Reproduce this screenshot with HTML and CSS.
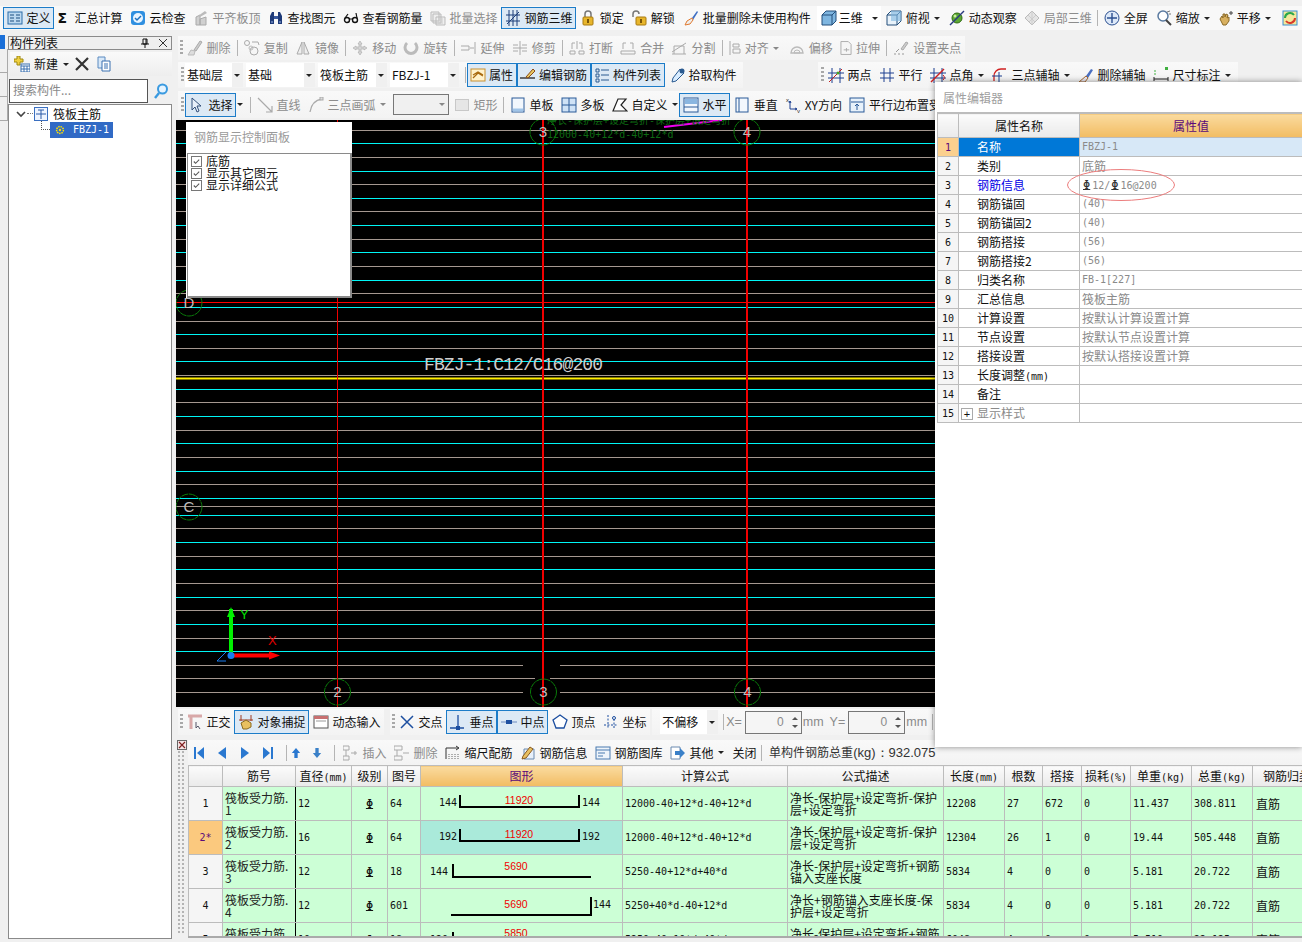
FILE: index.html
```html
<!DOCTYPE html>
<html lang="zh">
<head>
<meta charset="utf-8">
<title>钢筋三维</title>
<link rel="stylesheet" href="styles.css">
</head>
<body>
<div class="app">

  <header class="topbar">
    <span class="t on"><svg class="ic" viewBox="0 0 16 16"><rect x="1" y="2" width="14" height="12" fill="#bcd8f0" stroke="#2a6ca8"/><path d="M3 5h4M3 8h4M3 11h4M9 5h4M9 8h4M9 11h4" stroke="#1d4f80"/></svg>定义</span>
    <span class="t"><span class="sigma">Σ</span><span class="lead">汇总计算</span></span>
    <span class="t"><svg class="ic" viewBox="0 0 16 16"><rect x="1" y="1" width="14" height="14" rx="3" fill="#2f8fe0"/><circle cx="8" cy="8" r="5" fill="#e8f4ff"/><path d="M5 8l2 2 4-4" fill="none" stroke="#1c6fc0" stroke-width="1.5"/></svg>云检查</span>
    <span class="t off"><svg class="ic" viewBox="0 0 16 16"><path d="M3 15V7l4-2v10zM7 15V9l6-2v8z" fill="#d0d0d0" stroke="#aaa"/><path d="M5 6l7-5 2 2-7 4z" fill="#bbb"/></svg>平齐板顶</span>
    <span class="t"><svg class="ic" viewBox="0 0 16 16"><path d="M2 14V6l2-4h2v12zM14 14V6l-2-4h-2v12z" fill="#1e3a78"/><rect x="6" y="6" width="4" height="3" fill="#3a5aa0"/><path d="M3 12h2M11 12h2" stroke="#9db8e8"/></svg>查找图元</span>
    <span class="t"><svg class="ic" viewBox="0 0 16 16"><circle cx="4" cy="10" r="2.5" fill="none" stroke="#111" stroke-width="1.4"/><circle cx="12" cy="10" r="2.5" fill="none" stroke="#111" stroke-width="1.4"/><path d="M6 9h4M2 8l3-4M14 8l-1-5" fill="none" stroke="#111" stroke-width="1.2"/></svg>查看钢筋量</span>
    <span class="t off"><svg class="ic" viewBox="0 0 16 16"><path d="M1 2h8v9H1zM3 4h8v9H3zM6 7h9v8H6z" fill="#eee" stroke="#bbb"/><path d="M8 9h5M8 11h5M8 13h5" stroke="#ccc"/></svg>批量选择</span>
    <span class="t on"><svg class="ic" viewBox="0 0 16 16"><path d="M1 5h14M1 11h14M4 0v16M8 0v16M12 0v16M2 14L14 2" stroke="#1d3f7a" fill="none"/></svg>钢筋三维</span>
    <span class="t"><svg class="ic" viewBox="0 0 16 16"><path d="M5 7V4a3 3 0 016 0v3" fill="none" stroke="#777" stroke-width="1.5"/><rect x="3" y="7" width="10" height="8" rx="1" fill="#e8b62c" stroke="#a87a10"/><rect x="7" y="9" width="2" height="4" fill="#7a5608"/></svg>锁定</span>
    <span class="t"><svg class="ic" viewBox="0 0 16 16"><path d="M2 7V4a3 3 0 016 0" fill="none" stroke="#777" stroke-width="1.5"/><rect x="5" y="7" width="10" height="8" rx="1" fill="#e8b62c" stroke="#a87a10"/><rect x="9" y="9" width="2" height="4" fill="#7a5608"/></svg>解锁</span>
    <span class="t gap1"><svg class="ic" viewBox="0 0 16 16"><path d="M9 8l5-7 1 1-5 8z" fill="#3f6fc4"/><path d="M9 8l1 2-3 4-5 1 2-4z" fill="#eee" stroke="#e07a30"/></svg>批量删除未使用构件</span>
    <span class="whitebox">
      <span class="t"><svg class="ic" viewBox="0 0 16 16"><path d="M1 5l4-4h10v10l-4 4H1z" fill="#7fb6e0" stroke="#244f7a"/><path d="M1 5h10v10M11 5l4-4" fill="none" stroke="#244f7a"/></svg><span class="tight">三维</span></span>
      <i class="caret wide"></i>
    </span>
    <span class="t gap1"><svg class="ic" viewBox="0 0 16 16"><path d="M1 5l4-4h10v10l-4 4H1z" fill="#e8f2fa" stroke="#244f7a"/><path d="M1 5h10v10M11 5l4-4" fill="none" stroke="#244f7a"/><path d="M5 1h10v10H5z" fill="#7fb6e0" fill-opacity=".6"/></svg>俯视</span><i class="caret"></i>
    <span class="t gap2"><svg class="ic" viewBox="0 0 16 16"><circle cx="8" cy="8" r="5" fill="#5da832" stroke="#2e6a12"/><path d="M1 15L15 1" stroke="#2a3a80" stroke-width="1.5"/><circle cx="6" cy="6" r="1.5" fill="#c8f0a0"/></svg>动态观察</span>
    <span class="t off"><svg class="ic" viewBox="0 0 16 16"><path d="M8 1l7 7-7 7-7-7z" fill="#e4e4e4" stroke="#bbb"/><path d="M4 5l7 7M8 1v14M12 5l-7 7" stroke="#ccc"/></svg>局部三维</span>
    <i class="sep"></i>
    <span class="t"><svg class="ic" viewBox="0 0 16 16"><circle cx="8" cy="8" r="7" fill="#dce8f8" stroke="#2b4f90"/><path d="M8 3v10M3 8h10" stroke="#2b4f90" stroke-width="1.4"/></svg>全屏</span>
    <span class="t gap1"><svg class="ic" viewBox="0 0 16 16"><circle cx="7" cy="6" r="5" fill="#fff" stroke="#5a7aa0" stroke-width="1.5"/><path d="M10 10l5 5" stroke="#444" stroke-width="2"/><path d="M11 2l3-1M13 4h2" stroke="#777"/></svg>缩放</span><i class="caret"></i>
    <span class="t"><svg class="ic" viewBox="0 0 16 16"><path d="M3 9l2-3 1 2V4l2 0 0 3 1-3 2 1-1 3 2-1v4l-3 4H6z" fill="#d8b060" stroke="#8a6a28"/><path d="M12 3h4M14 1v4" stroke="#444"/></svg>平移</span><i class="caret"></i>
    <span class="t last"><svg class="ic" viewBox="0 0 16 16"><rect x="1" y="1" width="14" height="14" fill="#f4e89a" stroke="#3b8fd0"/><path d="M3 8a5 5 0 019-3" fill="none" stroke="#2aa84a" stroke-width="2"/><path d="M13 8a5 5 0 01-9 3" fill="none" stroke="#d83a2a" stroke-width="2"/></svg></span>
  </header>

  <div class="workspace">
    <aside class="left">
      <div class="tabs"><i class="tab first"></i><i class="tab"></i><i class="tab"></i><i class="tab"></i></div>
      <div class="leftcol">
        <div class="dockhead"><span>构件列表</span><span class="dockbtns"><svg class="mini" viewBox="0 0 10 10"><path d="M3 1h4v5H3zM1 6h8M5 6v4M6 1v5" fill="none" stroke="#111"/></svg><svg class="mini" viewBox="0 0 10 10"><path d="M1 1l8 8M9 1l-8 8" stroke="#333"/></svg></span></div>
        <div class="lefttools">
          <span class="t"><svg class="ic" viewBox="0 0 16 16"><path d="M3 0h3v3h3v3H6v3H3V6H0V3h3z" fill="#f0d040" stroke="#a08a10"/><rect x="7" y="8" width="9" height="8" fill="#fff" stroke="#3a70b0"/><path d="M7 10h9M10 10v6M13 10v6M7 13h9" stroke="#3a70b0"/></svg>新建</span><i class="caret"></i>
          <svg class="ic bigx" viewBox="0 0 16 16"><path d="M2 2l12 12M14 2L2 14" stroke="#333" stroke-width="2.2"/></svg>
          <svg class="ic" viewBox="0 0 16 16"><path d="M2 1h7v11H2z" fill="#d8e8f8" stroke="#5a8ac0"/><path d="M6 5h8v10H6z" fill="#fff" stroke="#3a70b0"/><path d="M8 8h4M8 10h4M8 12h4" stroke="#3a70b0"/></svg>
        </div>
        <div class="searchrow">
          <div class="search">搜索构件...</div>
          <svg class="ic" viewBox="0 0 16 16"><circle cx="9.5" cy="6" r="4.5" fill="#e6f4ff" stroke="#3a9ae0" stroke-width="2"/><path d="M6 10l-4 5" stroke="#3a9ae0" stroke-width="2.4"/></svg>
        </div>
        <div class="tree">
          <div class="node"><svg class="chev" viewBox="0 0 10 10"><path d="M1 3l4 4 4-4" fill="none" stroke="#444" stroke-width="1.6"/></svg><i class="dash"></i><svg class="ic treeic" viewBox="0 0 14 14"><rect x=".5" y=".5" width="13" height="13" fill="#eef4ff" stroke="#3a6fc0"/><path d="M2 7h10M7 3v9M4 3h6" stroke="#2a5aa8" fill="none"/></svg><span>筏板主筋</span></div>
          <div class="node child"><i class="ell"></i><span class="sel"><svg class="star" viewBox="0 0 10 10"><circle cx="5" cy="5" r="3.4" fill="none" stroke="#ffe000" stroke-width="1.5" stroke-dasharray="1.5 .8"/><circle cx="5" cy="5" r="1.2" fill="#ffe000"/></svg><span class="m">FBZJ-1</span></span></div>
        </div>
      </div>
    </aside>

    <main class="center">
      <div class="row r2">
        <div class="band">
          <i class="grip"></i>
          <span class="t off"><svg class="ic" viewBox="0 0 16 16"><path d="M7 10l6-9 2 1-6 9z" fill="#ccc" stroke="#aaa"/><path d="M1 15l3-5 4 1-1 4z" fill="#ddd" stroke="#bbb"/></svg>删除</span><i class="sep"></i>
          <span class="t off"><svg class="ic" viewBox="0 0 16 16"><circle cx="3" cy="3" r="2.5" fill="none" stroke="#aaa"/><circle cx="10" cy="11" r="4" fill="none" stroke="#aaa"/><circle cx="7" cy="8" r="2" fill="none" stroke="#bbb"/><path d="M8 2h6l1 3" fill="none" stroke="#aaa"/></svg>复制</span>
          <span class="t off"><svg class="ic" viewBox="0 0 16 16"><path d="M7 2v12H2zM9 2v12h5z" fill="#eee" stroke="#aaa"/></svg>镜像</span><i class="sep"></i>
          <span class="t off"><svg class="ic" viewBox="0 0 16 16"><path d="M8 1l2 3H9v3h3V6l3 2-3 2V9H9v3h1l-2 3-2-3h1V9H4v1L1 8l3-2v1h3V4H6z" fill="#d4d4d4" stroke="#aaa" stroke-width=".6"/></svg>移动</span>
          <span class="t off"><svg class="ic" viewBox="0 0 16 16"><path d="M4 3a6 6 0 108 0" fill="none" stroke="#bbb" stroke-width="3"/></svg>旋转</span><i class="sep"></i>
          <span class="t off"><svg class="ic" viewBox="0 0 16 16"><path d="M14 2v12M0 6h8v4H0M9 8h4" fill="none" stroke="#aaa"/></svg>延伸</span>
          <span class="t off"><svg class="ic" viewBox="0 0 16 16"><path d="M8 1v14M1 5h5M1 11h5M10 5h5M10 11h5M1 8h14" fill="none" stroke="#aaa"/></svg>修剪</span><i class="sep"></i>
          <span class="t off"><svg class="ic" viewBox="0 0 16 16"><path d="M1 11h5v3H1zM10 11h5v3h-5zM3 3h3M10 3h3M8 1v8M3 3v6M13 3v6" fill="none" stroke="#aaa"/></svg>打断</span>
          <span class="t off"><svg class="ic" viewBox="0 0 16 16"><path d="M1 11h14v3H1zM3 3h3M10 3h3M3 3v6M13 3v6" fill="none" stroke="#aaa"/></svg>合并</span>
          <span class="t off"><svg class="ic" viewBox="0 0 16 16"><path d="M1 14h14M3 14V6h10v8M1 12L15 3" fill="none" stroke="#aaa"/></svg>分割</span><i class="sep"></i>
          <span class="t off"><svg class="ic narrow" viewBox="0 0 12 16"><path d="M1 1v14M4 4h6v3H4zM4 9h7v4H4z" fill="none" stroke="#aaa"/></svg>对齐</span><i class="caret gray"></i>
          <span class="t off"><svg class="ic" viewBox="0 0 16 16"><path d="M2 13a6 6 0 1112 0z" fill="none" stroke="#bbb" stroke-width="1.4"/><path d="M5 13a3 3 0 116 0z" fill="none" stroke="#bbb"/></svg>偏移</span>
          <span class="t off"><svg class="ic narrow" viewBox="1 0 13 16"><path d="M2 1h8l3 3v11H2z" fill="#f6f6f6" stroke="#aaa"/><path d="M5 10h6M8 8v4" stroke="#aaa"/></svg>拉伸</span><i class="sep"></i>
          <span class="t off"><svg class="ic" viewBox="0 0 16 16"><path d="M8 9l5-7 2 1-5 7z" fill="#ccc" stroke="#aaa"/><path d="M1 14h2M5 14h2M9 14h2M3 12l3-3" stroke="#999"/></svg>设置夹点</span>
        </div>
      </div>

      <div class="row r3">
        <div class="band b1">
          <i class="grip"></i>
          <span class="combo c0"><span>基础层</span><i class="caret"></i></span>
          <span class="combo"><span>基础</span><i class="caret"></i></span>
          <span class="combo"><span>筏板主筋</span><i class="caret"></i></span>
          <span class="combo"><span>FBZJ-1</span><i class="caret"></i></span>
          <i class="sep"></i>
          <span class="t on"><svg class="ic" viewBox="0 0 16 16"><rect x="1" y="2" width="14" height="12" fill="#fff2cc" stroke="#c89030"/><path d="M3 11l5-5 5 3M3 8l5-3 5 3" fill="none" stroke="#a86a10" stroke-width="1.3"/></svg>属性</span>
          <span class="t on"><svg class="ic" viewBox="0 0 16 16"><path d="M0 11h15" stroke="#222" stroke-width="1.3"/><path d="M6 10l7-8 2 2-7 7z" fill="#e8c860" stroke="#8a4a18"/></svg>编辑钢筋</span>
          <span class="t on"><svg class="ic" viewBox="0 0 16 16"><path d="M2 2h3v3H2zM2 7h3v3H2zM2 12h3v3H2zM7 3h8M7 8h8M7 13h8" fill="none" stroke="#2a5a90"/></svg>构件列表</span>
          <span class="t pick"><svg class="ic" viewBox="0 0 16 16"><path d="M10 2l4 4-8 8-4 1 1-4z" fill="#d8ecff" stroke="#2a5a90"/><circle cx="12" cy="4" r="2.5" fill="#2a5a90"/></svg>拾取构件</span>
        </div>
        <div class="band b2">
          <i class="grip"></i>
          <span class="t"><svg class="ic" viewBox="0 0 16 16"><path d="M4 1v15M12 1v15M0 6h16M0 11h16" stroke="#1d3f90" fill="none"/><path d="M1 15L14 2" stroke="#c02020"/><circle cx="10" cy="6" r="1.5" fill="#48a020"/></svg>两点</span>
          <span class="t"><svg class="ic" viewBox="0 0 16 16"><path d="M5 1v14M11 1v14M1 6h14M1 11h14" stroke="#1d3f90" fill="none"/></svg>平行</span>
          <span class="t"><svg class="ic" viewBox="0 0 16 16"><path d="M4 1v15M12 1v15M0 6h16M0 11h16" stroke="#1d3f90" fill="none"/><path d="M1 15L14 2" stroke="#d02020" stroke-width="1.4"/><path d="M13 8a3 3 0 010 5" fill="none" stroke="#d02020"/></svg>点角</span><i class="caret"></i>
          <span class="t"><svg class="ic" viewBox="0 0 16 16"><path d="M2 14V9a7 7 0 017-7h5" fill="none" stroke="#d02020" stroke-width="1.3"/><path d="M0 9h10M7 5v11" stroke="#1d3f90"/></svg>三点辅轴</span><i class="caret"></i>
          <span class="t"><svg class="ic" viewBox="0 0 16 16"><path d="M8 9l5-7 2 1-5 8z" fill="#4a6fc0"/><path d="M8 9l2 2-3 4H1z" fill="#e8e8f4" stroke="#a86a30"/></svg>删除辅轴</span>
          <span class="t"><svg class="ic" viewBox="0 0 16 16"><rect x="12" y="0" width="3" height="3" fill="#40b040"/><path d="M1 12h14M1 10v4M15 10v4" stroke="#222"/><path d="M1 7h2M1 4h2" stroke="#40b040"/></svg>尺寸标注</span><i class="caret"></i>
        </div>
      </div>

      <div class="row r4">
        <div class="band b4">
          <i class="grip"></i>
          <span class="t on sel-btn"><svg class="ic" viewBox="0 0 16 16"><path d="M3 1v12l3-3 2 5 2-1-2-5h4z" fill="#e8f0fa" stroke="#33507a"/></svg>选择</span><i class="caret"></i><i class="sep"></i>
          <span class="t off"><svg class="ic" viewBox="0 0 16 16"><path d="M1 1l14 14M15 9v6H9" fill="none" stroke="#aaa" stroke-width="1.2"/></svg>直线</span>
          <span class="t off"><svg class="ic" viewBox="0 0 16 16"><path d="M2 15C3 8 7 3 14 2" fill="none" stroke="#aaa" stroke-width="1.3"/><rect x="12" y="0" width="3" height="3" fill="#ddd" stroke="#aaa"/></svg>三点画弧</span><i class="caret gray"></i>
          <span class="blank"><i class="caret gray"></i></span>
          <span class="t off"><span class="rectbox"></span>矩形</span><i class="sep"></i>
          <span class="t"><svg class="ic" viewBox="0 0 16 16"><rect x="2" y="1" width="12" height="14" fill="#f2f7fd" stroke="#2a5a98"/><path d="M3 13h10" stroke="#a0c4e8" stroke-width="3"/></svg>单板</span>
          <span class="t"><svg class="ic" viewBox="0 0 16 16"><rect x="1" y="1" width="14" height="14" fill="#cfe2f6" stroke="#2a5a98"/><path d="M8 1v14M1 8h14" stroke="#2a5a98"/></svg>多板</span>
          <span class="t"><svg class="ic" viewBox="0 0 16 16"><path d="M6 2h8l-5 6 6 6H1z" fill="#fff" stroke="#222" stroke-width="1.2"/></svg>自定义</span><i class="caret"></i>
          <span class="t on"><svg class="ic" viewBox="0 0 16 16"><rect x="1" y="1" width="14" height="14" fill="#f2f7fd" stroke="#2a5a98"/><rect x="2" y="2" width="12" height="5" fill="#8ab6e0"/><path d="M1 10h14" stroke="#2a5a98"/></svg>水平</span>
          <span class="t"><svg class="ic" viewBox="0 0 16 16"><rect x="2" y="1" width="12" height="14" fill="#f2f7fd" stroke="#2a5a98"/><path d="M5 1v14" stroke="#2a5a98"/></svg>垂直</span>
          <span class="t"><svg class="ic" viewBox="0 0 16 16"><path d="M5 4v8h7M5 4L4 6M5 4l1 2M12 12l-2-1M12 12l-2 1" fill="none" stroke="#1d3f90"/><text class="icx" x="1" y="5">x</text><text class="icx" x="12" y="16">y</text></svg>XY方向</span>
          <span class="t"><svg class="ic" viewBox="0 0 16 16"><rect x="1" y="1" width="14" height="14" fill="#e8f2fb" stroke="#2a5a98"/><path d="M2 5h12M8 13V7M6 9l2-2 2 2" fill="none" stroke="#2a5a98"/></svg>平行边布置受力筋</span>
        </div>
      </div>

      <div class="canvas">
        <svg class="cad" viewBox="0 0 759 587">
          <path class="gray" d="M0 10.5H759M0 37.5H759M0 64.5H759M0 91.5H759M0 119.5H759M0 146.5H759M0 173.5H759M0 201.5H759M0 228.5H759M0 255.5H759M0 282.5H759M0 310.5H759M0 337.5H759M0 364.5H759M0 386.5H759M0 408.5H759M0 436.5H759M0 463.5H759M0 490.5H759M0 518.5H759M0 545.5H347M384 545.5H759M0 558.5H359M374 558.5H759M0 572.5H347M384 572.5H759"/>
          <path class="cyan" d="M0 23.5H759M0 51.5H759M0 78.5H759M0 105.5H759M0 132.5H759M0 160.5H759M0 187.5H759M0 214.5H759M0 241.5H759M0 269.5H759M0 296.5H759M0 323.5H759M0 351.5H759M0 378.5H759M0 395.5H759M0 422.5H759M0 449.5H759M0 477.5H759M0 504.5H759M0 531.5H759"/>
          <path class="yellow" d="M0 258.5H759"/>
          <path class="redh" d="M0 182.5H759"/>
          <path class="redv" d="M161.5 0V587"/>
          <path class="redv2" d="M367 0V587M571 0V587"/>
          <path class="magenta" d="M488 7L546 0"/>
          <text class="dim" x="371" y="4">净长-保护层+设定弯折-保护层+设定弯折</text>
          <text class="dim" x="371" y="18">12000-40+12*d-40+12*d</text>
          <g class="axisring">
            <circle cx="367" cy="12" r="13"/><circle cx="571" cy="12" r="13"/><circle cx="13" cy="183" r="13"/><circle cx="13" cy="387" r="13"/><circle cx="161.500" cy="572" r="13"/><circle cx="367.500" cy="572" r="13"/><circle cx="571.500" cy="572" r="13"/>
          </g>
          <g class="axislabel">
            <text x="367" y="17">3</text><text x="571" y="17">4</text><text x="13" y="188">D</text><text x="13" y="392">C</text><text x="161.500" y="577">2</text><text x="367.500" y="577">3</text><text x="571.500" y="577">4</text>
          </g>
          <text class="tag" x="248" y="250" textLength="179" lengthAdjust="spacing">FBZJ-1:C12/C16@200</text>
          <path class="axg" d="M55 535V489"/><path class="axgh" d="M55 487l-4 10h8z"/>
          <path class="axr" d="M55 535.500H94"/><path class="axrh" d="M104 535.500l-11-4v8z"/>
          <path class="axb" d="M41 541l9-9M41 541h9"/><circle class="axbd" cx="55" cy="535.500" r="3.500"/>
          <text class="axy" x="64" y="499">Y</text><text class="axx" x="92" y="525">X</text>
        </svg>
        <section class="popup">
          <div class="popup-title">钢筋显示控制面板</div>
          <div class="popup-body">
            <label class="chk"><i class="box"><svg viewBox="0 0 10 10"><path d="M2 5l2 2 4-4" fill="none" stroke="#555" stroke-width="1.2"/></svg></i>底筋</label>
            <label class="chk"><i class="box"><svg viewBox="0 0 10 10"><path d="M2 5l2 2 4-4" fill="none" stroke="#555" stroke-width="1.2"/></svg></i>显示其它图元</label>
            <label class="chk"><i class="box"><svg viewBox="0 0 10 10"><path d="M2 5l2 2 4-4" fill="none" stroke="#555" stroke-width="1.2"/></svg></i>显示详细公式</label>
          </div>
        </section>
      </div>

      <div class="row r5">
        <div class="band">
          <i class="grip"></i>
          <span class="t"><svg class="ic" viewBox="0 0 16 16"><path d="M1 2h14M4 2v13" stroke="#d8a8a8" stroke-width="3" fill="none"/><path d="M9 8v6l2-2 2 3" fill="none" stroke="#556"/></svg>正交</span>
          <span class="t on"><svg class="ic" viewBox="0 0 16 16"><path d="M3 1v6M13 1v6M1 6h14" stroke="#a03a20" fill="none"/><path d="M3 9l5-3 5 3v4l-4 2H5z" fill="#e8c060" stroke="#8a6a20"/></svg>对象捕捉</span>
          <span class="t"><svg class="ic" viewBox="0 0 16 16"><rect x="1" y="2" width="14" height="12" fill="#fff" stroke="#555"/><rect x="1" y="2" width="14" height="3" fill="#c87070"/><path d="M3 7h10" stroke="#999"/></svg>动态输入</span>
        </div>
        <div class="band">
          <i class="grip"></i>
          <span class="t"><svg class="ic" viewBox="0 0 16 16"><path d="M2 2l12 12M14 2L2 14" stroke="#1d4fa0" stroke-width="1.5"/></svg>交点</span>
          <span class="t on"><svg class="ic" viewBox="0 0 16 16"><path d="M8 1v13M0 14h14" stroke="#1d4fa0" stroke-width="1.3"/><rect x="6" y="12" width="4" height="4" fill="#1d4fa0"/></svg>垂点</span>
          <span class="t on"><svg class="ic" viewBox="0 0 16 16"><path d="M0 8h16" stroke="#6a8ac0"/><rect x="5" y="6" width="6" height="4" fill="#1d4fa0"/></svg>中点</span>
          <span class="t"><svg class="ic" viewBox="0 0 16 16"><path d="M8 1l7 5-3 8H4L1 6z" fill="#fff" stroke="#1d4fa0" stroke-width="1.3"/></svg>顶点</span>
          <span class="t"><svg class="ic" viewBox="0 0 16 16"><path d="M5 1v14M1 11h14M11 5v10" stroke="#1d4fa0" stroke-dasharray="2 1.500" fill="none"/><circle cx="11" cy="4" r="1.500" fill="none" stroke="#1d4fa0"/></svg>坐标</span>
        </div>
        <div class="band b5">
          <span class="combo c5"><span>不偏移</span><i class="caret"></i></span>
          <i class="sep"></i>
          <span class="lab">X=</span>
          <span class="spin"><span class="val">0</span><span class="arr"><i></i><i class="dn"></i></span></span>
          <span class="lab">mm</span>
          <span class="lab ml">Y=</span>
          <span class="spin"><span class="val">0</span><span class="arr"><i></i><i class="dn"></i></span></span>
          <span class="lab">mm</span>
          <i class="sep"></i>
        </div>
      </div>

      <div class="bottom">
        <div class="dockside"><svg class="closex" viewBox="0 0 10 10"><rect x=".5" y=".5" width="9" height="9" fill="#f4e4e4" stroke="#666"/><path d="M2 2l6 6M8 2l-6 6" stroke="#802020" stroke-width="1.2"/></svg><i class="dots"></i></div>
        <div class="bottomcol">
          <div class="r6">
            <svg class="nav" viewBox="0 0 12 14"><path d="M1 1h2v12H1zM11 1v12L4 7z" fill="#2a78d0"/></svg>
            <svg class="nav" viewBox="0 0 12 14"><path d="M10 1v12L2 7z" fill="#2a78d0"/></svg>
            <svg class="nav" viewBox="0 0 12 14"><path d="M2 1v12l8-6z" fill="#2a78d0"/></svg>
            <svg class="nav" viewBox="0 0 12 14"><path d="M11 1H9v12h2zM1 1v12l7-6z" fill="#2a78d0"/></svg>
            <i class="sep s6"></i>
            <svg class="nav sm" viewBox="0 0 12 14"><path d="M6 1l5 6H8v6H4V7H1z" fill="#2a78d0"/></svg>
            <svg class="nav sm" viewBox="0 0 12 14"><path d="M6 13l5-6H8V1H4v6H1z" fill="#3a80c8"/></svg>
            <i class="sep s6"></i>
            <span class="t off"><svg class="ic" viewBox="0 0 16 16"><path d="M0 1h6v4H0zM0 11h6v4H0zM3 5v6M8 8h6M12 6v4" fill="none" stroke="#aaa"/></svg>插入</span>
            <span class="t off"><svg class="ic" viewBox="0 0 16 16"><path d="M0 1h8v4H0zM0 11h8v4H0zM3 5v6M9 8h6" fill="none" stroke="#aaa"/></svg>删除</span>
            <span class="t"><svg class="ic" viewBox="0 0 16 16"><path d="M1 14V3h12M11 1l3 2-3 2" fill="none" stroke="#333"/><path d="M4 14V8M7 14V8M10 14V8M13 14V8" stroke="#666" stroke-dasharray="1 1"/></svg>缩尺配筋</span>
            <span class="t"><svg class="ic" viewBox="0 0 16 16"><path d="M4 4h10v10H4z" fill="#e8f0fa" stroke="#6a8ab0"/><path d="M3 11l7-9 3 2-7 9-4 1z" fill="#e8c060" stroke="#8a5a20"/></svg>钢筋信息</span>
            <span class="t"><svg class="ic" viewBox="0 0 16 16"><rect x="1" y="2" width="14" height="12" fill="#eef4fa" stroke="#4a7ab0"/><path d="M1 5h14M3 8h7M3 11h5" stroke="#4a7ab0"/></svg>钢筋图库</span>
            <span class="t"><svg class="ic" viewBox="0 0 16 16"><path d="M1 2h9v12H1z" fill="#fff" stroke="#6a8ab0"/><path d="M5 6h5V3l5 5-5 5v-3H5z" fill="#3a80c8"/></svg>其他</span><i class="caret"></i>
            <span class="t close">关闭</span><i class="sep s6"></i>
            <span class="total">单构件钢筋总重<span class="latin">(kg)：932.075</span></span>
          </div>
          <div class="gridwrap">
            <table class="grid">
              <colgroup><col class="w34"><col class="w73"><col class="w56"><col class="w36"><col class="w33"><col class="w202"><col class="w165"><col class="w156"><col class="w61"><col class="w38"><col class="w39"><col class="w49"><col class="w61"><col class="w61"><col class="w80"></colgroup>
              <thead>
                <tr><th></th><th>筋号</th><th>直径<span class="u">(mm)</span></th><th>级别</th><th>图号</th><th class="hot">图形</th><th>计算公式</th><th>公式描述</th><th>长度<span class="u">(mm)</span></th><th>根数</th><th>搭接</th><th>损耗<span class="u">(%)</span></th><th>单重<span class="u">(kg)</span></th><th>总重<span class="u">(kg)</span></th><th class="lft">钢筋归类</th></tr>
              </thead>
              <tbody>
                <tr><td class="idx">1</td><td class="nm">筏板受力筋.<br>1</td><td class="n">12</td><td class="g"><span class="grade">Φ</span></td><td class="n">64</td>
                  <td class="shape"><svg class="sh" viewBox="0 0 201 33"><path d="M39 8V20H158V8"/><text class="sn" x="36" y="19" text-anchor="end">144</text><text class="sn" x="161" y="19">144</text><text class="sr" x="98" y="17" text-anchor="middle">11920</text></svg></td>
                  <td class="n">12000-40+12*d-40+12*d</td><td class="d">净长-保护层+设定弯折-保护<br>层+设定弯折</td><td class="n">12208</td><td class="n">27</td><td class="n">672</td><td class="n">0</td><td class="n">11.437</td><td class="n">308.811</td><td class="k">直筋</td></tr>
                <tr><td class="idx cur">2*</td><td class="nm">筏板受力筋.<br>2</td><td class="n">16</td><td class="g"><span class="grade">Φ</span></td><td class="n">64</td>
                  <td class="shape act"><svg class="sh" viewBox="0 0 201 33"><path d="M39 8V20H158V8"/><text class="sn" x="36" y="19" text-anchor="end">192</text><text class="sn" x="161" y="19">192</text><text class="sr" x="98" y="17" text-anchor="middle">11920</text></svg></td>
                  <td class="n">12000-40+12*d-40+12*d</td><td class="d">净长-保护层+设定弯折-保护<br>层+设定弯折</td><td class="n">12304</td><td class="n">26</td><td class="n">1</td><td class="n">0</td><td class="n">19.44</td><td class="n">505.448</td><td class="k">直筋</td></tr>
                <tr><td class="idx">3</td><td class="nm">筏板受力筋.<br>3</td><td class="n">12</td><td class="g"><span class="grade">Φ</span></td><td class="n">18</td>
                  <td class="shape"><svg class="sh" viewBox="0 0 201 33"><path d="M32 9V22H170"/><text class="sn" x="27" y="20" text-anchor="end">144</text><text class="sr" x="95" y="15" text-anchor="middle">5690</text></svg></td>
                  <td class="n">5250-40+12*d+40*d</td><td class="d">净长-保护层+设定弯折+钢筋<br>锚入支座长度</td><td class="n">5834</td><td class="n">4</td><td class="n">0</td><td class="n">0</td><td class="n">5.181</td><td class="n">20.722</td><td class="k">直筋</td></tr>
                <tr><td class="idx">4</td><td class="nm">筏板受力筋.<br>4</td><td class="n">12</td><td class="g"><span class="grade">Φ</span></td><td class="n">601</td>
                  <td class="shape"><svg class="sh" viewBox="0 0 201 33"><path d="M30 26H170V8"/><text class="sn" x="172" y="19">144</text><text class="sr" x="95" y="19" text-anchor="middle">5690</text></svg></td>
                  <td class="n">5250+40*d-40+12*d</td><td class="d">净长+钢筋锚入支座长度-保<br>护层+设定弯折</td><td class="n">5834</td><td class="n">4</td><td class="n">0</td><td class="n">0</td><td class="n">5.181</td><td class="n">20.722</td><td class="k">直筋</td></tr>
                <tr><td class="idx">5</td><td class="nm">筏板受力筋.<br>5</td><td class="n">10</td><td class="g"><span class="grade">Φ</span></td><td class="n">18</td>
                  <td class="shape"><svg class="sh" viewBox="0 0 201 33"><path d="M32 9V22H170"/><text class="sn" x="27" y="20" text-anchor="end">120</text><text class="sr" x="95" y="14" text-anchor="middle">5850</text></svg></td>
                  <td class="n">5250-40+10*d+40*d</td><td class="d">净长-保护层+设定弯折+钢筋<br>锚入支座长度</td><td class="n">6048</td><td class="n">4</td><td class="n">0</td><td class="n">0</td><td class="n">5.510</td><td class="n">22.125</td><td class="k">直筋</td></tr>
              </tbody>
            </table>
          </div>
        </div>
      </div>
    </main>
  </div>

  <section class="props">
    <div class="props-title">属性编辑器</div>
    <table class="ptable">
      <colgroup><col class="p1"><col class="p2"><col></colgroup>
      <thead><tr><th></th><th>属性名称</th><th class="hot">属性值</th></tr></thead>
      <tbody>
        <tr class="cur"><td class="idx">1</td><td class="pn">名称</td><td class="pv m">FBZJ-1</td></tr>
        <tr><td class="idx">2</td><td class="pn">类别</td><td class="pv">底筋</td></tr>
        <tr><td class="idx">3</td><td class="pn link">钢筋信息</td><td class="pv m"><span class="grade">Φ</span>12/<span class="grade">Φ</span>16@200</td></tr>
        <tr><td class="idx">4</td><td class="pn">钢筋锚固</td><td class="pv m">(40)</td></tr>
        <tr><td class="idx">5</td><td class="pn">钢筋锚固2</td><td class="pv m">(40)</td></tr>
        <tr><td class="idx">6</td><td class="pn">钢筋搭接</td><td class="pv m">(56)</td></tr>
        <tr><td class="idx">7</td><td class="pn">钢筋搭接2</td><td class="pv m">(56)</td></tr>
        <tr><td class="idx">8</td><td class="pn">归类名称</td><td class="pv m">FB-1[227]</td></tr>
        <tr><td class="idx">9</td><td class="pn">汇总信息</td><td class="pv">筏板主筋</td></tr>
        <tr><td class="idx">10</td><td class="pn">计算设置</td><td class="pv">按默认计算设置计算</td></tr>
        <tr><td class="idx">11</td><td class="pn">节点设置</td><td class="pv">按默认节点设置计算</td></tr>
        <tr><td class="idx">12</td><td class="pn">搭接设置</td><td class="pv">按默认搭接设置计算</td></tr>
        <tr><td class="idx">13</td><td class="pn">长度调整<span class="u">(mm)</span></td><td class="pv"></td></tr>
        <tr><td class="idx">14</td><td class="pn">备注</td><td class="pv"></td></tr>
        <tr><td class="idx">15</td><td class="pn exp"><i class="plus">+</i>显示样式</td><td class="pv"></td></tr>
      </tbody>
    </table>
    <svg class="ring" viewBox="0 0 110 34"><ellipse cx="55" cy="17" rx="53.500" ry="15.500"/></svg>
  </section>

</div>
</body>
</html>
```
FILE: styles.css
```css
* { box-sizing: border-box; }
html, body { margin: 0; padding: 0; }
body {
  width: 1302px; height: 942px; overflow: hidden;
  background: #f0f0f0; color: #111;
  font: 12px/14px "Noto Sans CJK SC", "Noto Sans", sans-serif;
}
i { font-style: normal; }
.app { position: relative; width: 1302px; height: 942px; overflow: hidden; }

.ic { width: 16px; height: 16px; flex: none; display: block; }
.ic.narrow { width: 12px; }
.icx { font: 6px "Liberation Sans", sans-serif; fill: #222; }
.t { display: inline-flex; align-items: center; gap: 4px; padding: 0 3.5px; white-space: nowrap; flex: none; height: 100%; }
.t.off { color: #8c8c8c; }
.t.on { border: 1px solid #1c7cc8; background: #dce9f5; padding: 0 2.5px; }
.lead { margin-left: 3px; }
.tight { margin-left: -2px; }
.gap1 { margin-left: 1px; }
.gap2 { margin-left: 2px; }
.sigma { width: 10px; font: bold 14px/14px "DejaVu Sans", sans-serif; color: #111; }
.caret { display: inline-block; flex: none; width: 0; height: 0; margin: 0 3px 0 1px; border-left: 3px solid transparent; border-right: 3px solid transparent; border-top: 3px solid #222; }
.caret.gray { border-top-color: #888; }
.caret.wide { margin: 0 3px 0 6px; }
.sep { flex: none; width: 1px; height: 16px; background: #b4b4b4; margin: 0 2px; }
.grip { flex: none; width: 3px; height: 16px; margin: 0 0 0 2px; background: repeating-linear-gradient(#a8a8a8 0 2px, transparent 2px 4px); }

/* top toolbar */
.topbar { display: flex; align-items: center; height: 24px; margin: 6px 0 5px; padding-left: 3px; background: #f8f8f8; }
.topbar > .t { height: 22px; }
.whitebox { display: flex; align-items: center; height: 24px; margin-left: 3px; background: #fff; flex: none; }
.whitebox .t { height: 22px; }
.last { padding-left: 8px; }

/* layout */
.workspace { display: flex; height: 907px; }
.left { display: flex; width: 176px; flex: none; }
.tabs { width: 8px; flex: none; }
.tab { display: block; height: 24px; border-bottom: 1px solid #aaa; border-right: 1px solid #aaa; }
.tab.first { height: 14px; background: #1a6fd8; border: 0; margin-right: 3px; }
.leftcol { width: 164px; flex: none; }
.dockhead { display: flex; justify-content: space-between; align-items: center; height: 14px; margin-top: 1px; padding: 0 3px 0 1px; border: 1px solid #8a8a8a; background: #efefef; line-height: 12px; }
.dockbtns { display: flex; gap: 8px; }
.mini { width: 10px; height: 10px; display: block; }
.lefttools { display: flex; align-items: center; height: 24px; margin: 2px 0 3px 2px; background: linear-gradient(#fafafa, #eee); }
.lefttools .t { padding-left: 4px; }
.lefttools .caret { margin: 0 1px 0 1px; }
.bigx { margin: 0 6px 0 4px; }
.searchrow { display: flex; align-items: center; gap: 5px; }
.search { width: 139px; height: 24px; margin-left: 1px; padding: 0 3px; line-height: 19px; border: 1px solid #555; background: #fff; color: #8a8a8a; }
.tree { height: 835px; margin-top: 1px; border: 1px solid #8a8a8a; background: #fff; }
.node { display: flex; align-items: center; height: 17px; padding-left: 7px; }
.chev { width: 10px; height: 10px; flex: none; }
.dash { width: 6px; margin: 0 1px; border-top: 1px dotted #777; flex: none; }
.treeic { width: 14px; height: 14px; margin-right: 5px; }
.node.child { height: 16px; padding-left: 32px; }
.ell { width: 9px; height: 9px; margin-top: -9px; border-left: 1px dotted #555; border-bottom: 1px dotted #555; flex: none; }
.sel { display: flex; align-items: center; width: 63px; height: 16px; background: #316ac5; color: #fff; padding-left: 5px; }
.star { width: 10px; height: 10px; margin-right: 8px; flex: none; }
.m { font: 10px/14px "DejaVu Sans Mono", monospace; }

/* center */
.center { width: 1126px; flex: none; overflow: hidden; }
.row { display: flex; align-items: center; padding-left: 2px; flex: none; }
.band { display: flex; align-items: center; height: 100%; background: linear-gradient(#f9f9f9, #f3f3f3); flex: none; }
.r2 { height: 24px; margin-top: 1px; }
.r2 .t { height: 22px; padding: 0 3.6px; }
.r2 .sep { margin: 0 2.5px; }
.r2 .caret { margin-right: 6px; }
.r3 { height: 26px; margin-top: 2px; }
.r3 .t { height: 24px; }
.r3 .grip { margin: 0 1px 0 3px; }
.r3 .sep { margin: 0 1px 0 3px; }
.r3 .t.on { padding: 0 3px 0 2px; gap: 3px; }
.pick { gap: 3px; margin-left: 1px; }
.b1 { width: 565px; }
.b2 { margin-left: 75px; padding-right: 3px; }
.r3 .b2 .grip { margin: 0 0 0 3px; }
.b2 .caret { margin-right: 4px; }
.combo { display: flex; align-items: center; justify-content: space-between; width: 69px; height: 24px; margin-right: 3px; padding: 0 0 0 2px; background: linear-gradient(90deg, #fff 0 58px, #f0f0f0 58px); flex: none; }
.combo .caret { margin: 0 3px 0 0; }
.combo.c0 { width: 58px; background: linear-gradient(90deg, #fff 0 47px, #f0f0f0 47px); }
.r4 { height: 27px; margin-top: 3px; }
.r4 .t { height: 24px; }
.r4 .grip { margin: 0 1px 0 3px; }
.r4 .caret + .sep { margin: 0 2px 0 4px; }
.r4 .caret + .t.on { margin-left: -2px; }
.b4 { width: 1200px; }
.sel-btn { background: #dce9f5; }
.blank { display: flex; align-items: center; justify-content: flex-end; width: 56px; height: 21px; margin: 0 1px 0 4px; padding-right: 3px; background: #f0f0f0; border: 1px solid #777; flex: none; }
.blank .caret { margin: 0; }
.rectbox { width: 14px; height: 12px; margin: 0 1px; background: #e6e6e6; border: 1px solid #c8c8c8; }

/* canvas */
.canvas { position: relative; width: 759px; height: 587px; margin-top: 2px; background: #000; overflow: hidden; }
.cad { display: block; width: 759px; height: 587px; }
.cad path { fill: none; }
.gray { stroke: #a59890; }
.cyan { stroke: #00f5f5; }
.yellow { stroke: #ffee00; stroke-width: 2; }
.redh { stroke: #ff0000; }
.redv { stroke: #f00000; }
.redv2 { stroke: #f00000; stroke-width: 2; }
.magenta { stroke: #f000f0; stroke-width: 2; }
.dim { fill: #0d6a12; font: 10px "DejaVu Sans Mono", "Noto Sans CJK SC", monospace; }
.axisring circle { fill: none; stroke: #0a7a0a; stroke-dasharray: 7 .6; }
.axislabel text { fill: #bdbdbd; font: 15px "Liberation Sans", sans-serif; text-anchor: middle; }
.tag { fill: #cfcfcf; font: 18px "Liberation Mono", monospace; }
.cad .axg { stroke: #00f000; stroke-width: 4; }
.cad .axgh { fill: #00f000; }
.cad .axr { stroke: #ff0000; stroke-width: 4; }
.cad .axrh { fill: #ff0000; }
.cad .axb { stroke: #1a7cf0; }
.axbd { fill: #1a7cf0; }
.axy { fill: #00e000; font: 13px "Liberation Sans", sans-serif; }
.axx { fill: #e00000; font: 13px "Liberation Sans", sans-serif; }

.popup { position: absolute; left: 10px; top: 2px; width: 166px; height: 176px; background: #fff; }
.popup-title { height: 31px; padding: 8px 0 0 8px; color: #9a9a9a; }
.popup-body { height: 145px; margin: 0 0 0 1px; padding: 1px 0 0 3px; border: 1px solid #8a8a8a; border-width: 1px 2px 2px 1px; }
.chk { display: flex; align-items: center; height: 12px; gap: 4px; line-height: 12px; white-space: nowrap; }
.box { display: block; width: 11px; height: 11px; border: 1px solid #777; flex: none; }
.box svg { display: block; width: 9px; height: 9px; }

/* snap toolbar */
.r5 { height: 26px; margin-top: 2px; }
.r5 .t { height: 24px; }
.r5 .band + .band { margin-left: 6px; }
.r5 .b5.band { margin-left: 2px; }
.b5 { width: 700px; padding-left: 8px; }
.c5 { width: 58px; margin-right: 0; background: linear-gradient(90deg, #fff 0 47px, #f0f0f0 47px); }
.b5 .sep { margin: 0 2px 0 5px; }
.lab { color: #8a8a8a; font-family: "Liberation Sans", sans-serif; flex: none; font-size: 12.500px; }
.lab.ml { margin-left: 6px; }
.spin { display: flex; align-items: center; justify-content: flex-end; width: 57px; height: 23px; margin: 0 1px 0 3px; border: 1px solid #777; background: #f5f5f5; color: #8a8a8a; font: 12px "Liberation Sans", sans-serif; flex: none; }
.val { margin-right: 8px; }
.arr { display: flex; flex-direction: column; gap: 5px; margin-right: 3px; }
.arr i { width: 0; height: 0; border-left: 3px solid transparent; border-right: 3px solid transparent; border-bottom: 3px solid #555; }
.arr i.dn { border-bottom: 0; border-top: 3px solid #555; }

/* bottom */
.bottom { display: flex; margin-top: 5px; }
.dockside { width: 12px; flex: none; padding: 0 0 0 1px; }
.closex { display: block; width: 10px; height: 10px; }
.dots { display: block; width: 9px; height: 185px; background-image: radial-gradient(circle, #b4b4b4 1px, transparent 1.200px); background-size: 4px 4px; }
.bottomcol { width: 1114px; flex: none; }
.r6 { display: flex; align-items: center; height: 25px; padding-left: 5px; background: linear-gradient(#f9f9f9, #f3f3f3); white-space: nowrap; }
.r6 .t { height: 24px; }
.nav { width: 12px; height: 14px; margin-right: 11px; flex: none; }
.nav.sm { margin: 0 11px 0 0; width: 10px; }
.r6 .s6 { margin: 0 4px 0 1px; }
.close { padding-left: 5.5px; }
.total { margin-left: 3px; color: #333; }
.latin { font: 13px "Liberation Sans", sans-serif; }

.gridwrap { height: 173px; overflow: hidden; border-bottom: 2px solid #aaa; background: #fff; }
.grid, .ptable { table-layout: fixed; border-collapse: collapse; }
.grid { width: 1144px; }
.w34 { width: 34px; } .w73 { width: 73px; } .w56 { width: 56px; } .w36 { width: 36px; } .w33 { width: 33px; }
.w202 { width: 202px; } .w165 { width: 165px; } .w156 { width: 156px; } .w61 { width: 61px; } .w38 { width: 38px; }
.w39 { width: 39px; } .w49 { width: 49px; } .w80 { width: 80px; }
.grid th, .ptable th { font-weight: 400; background: linear-gradient(#fbfbfb, #eaeaea); border: 1px solid #bcbcbc; padding: 0; white-space: nowrap; overflow: hidden; }
.grid th { height: 21px; }
th.hot, .ptable th.hot { background: linear-gradient(#fadb9f, #f2bc62); color: #5a0a7a; }
th.lft { text-align: left; padding-left: 10px; }
.u { font: 10px "DejaVu Sans Mono", monospace; }
.grid td { height: 34px; padding: 0 1px; background: #ccffd6; border: 1px solid #bcbcbc; white-space: nowrap; overflow: hidden; vertical-align: middle; line-height: 12px; }
.grid td.idx, .ptable td.idx { text-align: center; background: #f5f5f5; font: 10px "DejaVu Sans Mono", monospace; }
.grid td.cur { background: #fbc97e; color: #5a0a7a; }
.grid td.nm { padding-left: 2px; color: #222; border-right: 1px solid #000; }
.grid td.n { font: 10px "DejaVu Sans Mono", monospace; padding-left: 2px; }
.grid td.g { text-align: center; }
.grade { font: 12px "DejaVu Sans Mono", monospace; text-decoration: underline; text-underline-offset: 0; }
.pv .grade { margin: 0 2px 0 1px; color: #333; }
.grid td.shape { padding: 0; }
.grid td.act { background: #aaeada; }
.grid td.d { padding-left: 2px; }
.grid td.k { padding-left: 3px; }
.sh { display: block; width: 201px; height: 33px; }
.sh path { fill: none; stroke: #000; stroke-width: 2; }
.sn { font: 10px "DejaVu Sans Mono", monospace; fill: #111; }
.sr { font: 10.500px "Liberation Sans", sans-serif; fill: #f00000; }

/* property panel */
.props { position: absolute; left: 935px; top: 82px; width: 367px; height: 665px; background: #fff; box-shadow: 0 0 6px rgba(0,0,0,.45); padding: 0 0 0 2px; }
.props-title { height: 31px; padding: 9px 0 0 6px; color: #a0a0a0; border-bottom: 1px solid #bcbcbc; }
.ptable { width: 366px; }
.p1 { width: 21px; } .p2 { width: 121px; }
.ptable th { height: 24px; }
.ptable td { height: 19px; padding: 0; border: 1px solid #bcbcbc; white-space: nowrap; line-height: 14px; }
.pn { padding-left: 18px !important; }
.pv { padding-left: 2px !important; color: #8a8a8a; }
.cur .idx { background: #fbd08e !important; color: #5a0a7a; }
.cur .pn { background: #0078d7; color: #fff; }
.cur .pv { background: #d7e8f7; }
.link { color: #0000e6; }
.exp { padding-left: 2px !important; color: #8a8a8a; }
.plus { display: inline-block; width: 12px; height: 12px; margin-right: 4px; border: 1px solid #aaa; color: #111; text-align: center; font: 11px/10px "Liberation Sans", sans-serif; vertical-align: middle; }
.ring { position: absolute; left: 131px; top: 86px; width: 110px; height: 34px; }
.ring ellipse { fill: none; stroke: #ec7d7d; }
```
